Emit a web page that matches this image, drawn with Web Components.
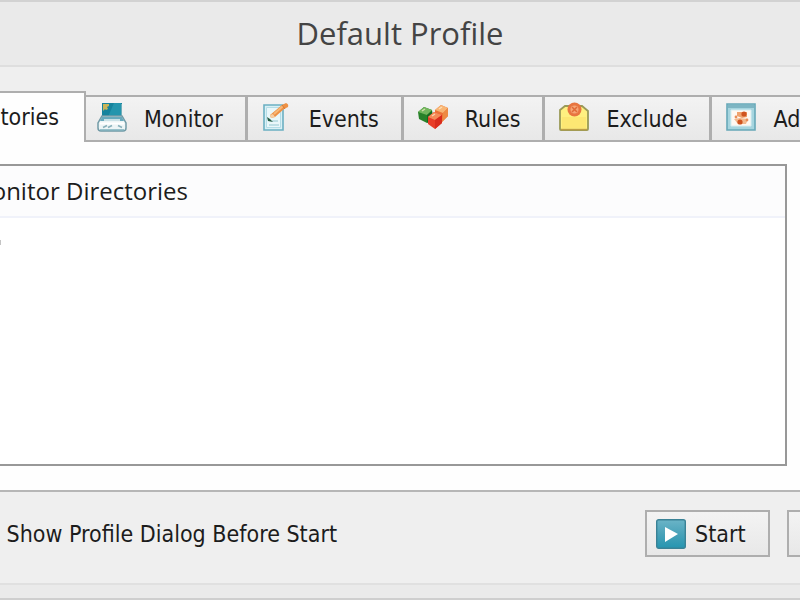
<!DOCTYPE html>
<html lang="en">
<head>
<meta charset="utf-8">
<title>Default Profile</title>
<style>
    html, body {
        margin: 0;
        height: 100%;
        overflow: hidden;
    }
    body {
        font: 23px/28px "DejaVu Sans Condensed", "DejaVu Sans", sans-serif;
        font-stretch: condensed;
        color: #1c1c1c;
        background: #efefef;
        --line: #aeaeae;
        --face: linear-gradient(#f3f3f3, #e8e8e8);
    }
</style>
</head>
<body>
<profile-dialog>
    <span slot="title">Default Profile</span>
    <profile-tab slot="tabs" selected>Directories</profile-tab>
    <profile-tab slot="tabs" icon="monitor">Monitor</profile-tab>
    <profile-tab slot="tabs" icon="events">Events</profile-tab>
    <profile-tab slot="tabs" icon="rules">Rules</profile-tab>
    <profile-tab slot="tabs" icon="exclude">Exclude</profile-tab>
    <profile-tab slot="tabs" icon="advanced">Advanced</profile-tab>
    <directory-list>Monitor Directories</directory-list>
    <dialog-option slot="footer">Always Show Profile Dialog Before Start</dialog-option>
    <dialog-button slot="footer" icon="start">Start</dialog-button>
    <dialog-button slot="footer" label="Cancel"></dialog-button>
</profile-dialog>

<script>
// 30x30 icons, keyed by the name used in the icon attribute
const ICONS = {
    monitor: `
        <path d="M5 1h20v14H5z" fill="#16839d"/>
        <path d="M17 1h7v14H11z" fill="#2495ad"/>
        <path d="M6 2h6v2l-2 1 1 2-2 1-1-1-2 2z" fill="#c9b458"/>
        <path d="M24.500 2v14" stroke="#70aeba"/>
        <path d="M5 14h20l4 7v5q0 3-3 3H4q-3 0-3-3v-5z" fill="#edf5f6" stroke="#719aa6" stroke-width="1.5"/>
        <path d="M5 15h20l2 4H3z" fill="#68aabd"/>
        <path d="M7 18h16" stroke="#c9e1e6" stroke-width="2"/>
        <path d="M3 21.500h24" stroke="#fff" stroke-width="2"/>
        <path d="M6 25.500l4-2m1 2l4-2m6 0l4 2" stroke="#8ab1bb" stroke-width="1.600"/>
        <path d="M3 28h24" stroke="#7cafbb" stroke-width="1.5"/>`,
    events: `
        <path d="M2 3h19v25H2z" fill="#d9f0f5" stroke="#6bb0c2" stroke-width="1.6"/>
        <path d="M4.500 5.500h14v20h-14z" fill="#e9f7fa" stroke="#b4dde7"/>
        <path d="M7 23h10M10 19h6" stroke="#94c7d1"/>
        <path d="M5 15l1 4 5 1-3-3z" fill="#255d43"/>
        <path d="M8 13L20 3l4-2q3 1 2 4l-4 2-9 8-4 1z" fill="#ee9145"/>
        <path d="M12 12l9-8" stroke="#f7b878" stroke-width="2"/>
        <path d="M20 3l3 4" stroke="#d9762e"/>
        <path d="M8 13l1 3 4-1-2-3z" fill="#f6cfa5"/>`,
    rules: `
        <path d="M0 10l6-5 8 3 1 8-6 5-8-4z" fill="#28822a"/>
        <path d="M0 10l6-5 8 3-5 5z" fill="#72b65d"/>
        <path d="M9 13l5-4 1 8-6 4z" fill="#176b20"/>
        <path d="M17 8l6-5 7 3v8l-6 6-7-3z" fill="#ec7136"/>
        <path d="M17 8l6-5 7 3-5 5z" fill="#f8b574"/>
        <path d="M25 11l5-5v8l-6 6z" fill="#ee8a43"/>
        <path d="M10 15l6-5 8 3v8l-7 6-7-5z" fill="#e83d28"/>
        <path d="M10 15l6-5 8 3-7 5z" fill="#f58b58"/>
        <path d="M17 18l7-5v8l-7 6z" fill="#d92c1d"/>
        <path d="M4 9l3-2m14 0l3-2M14 14l3-2" stroke="#fff0cf" stroke-width="1.5" opacity=".7"/>`,
    exclude: `
        <path d="M1 8l5-4h17l6 5v18q0 1-1 1H2q-1 0-1-1z" fill="#fff080" stroke="#9a9a58" stroke-width="1.8"/>
        <path d="M3 15h24v11H3z" fill="#fde773"/>
        <path d="M2 27.500h26" stroke="#bd9d45" stroke-width="1.5"/>
        <circle cx="15.500" cy="7.500" r="7" fill="#e87540"/>
        <circle cx="15.500" cy="7.500" r="4" fill="#f5a575"/>
        <path d="M13 5l5 5m0-5l-5 5" stroke="#e06a38" stroke-width="1.5"/>`,
    advanced: `
        <path d="M1 2h28v26H1z" fill="#a6d5df" stroke="#67a8b8" stroke-width="1.6"/>
        <path d="M2 3h26v3H2z" fill="#7db5c3"/>
        <path d="M5 8h20v16H5z" fill="#fff8f2" stroke="#d7eef2"/>
        <path d="M11 10h10v5l-5 1-5-2z" fill="#efa36f"/>
        <path d="M8 17l6-1 8 1-2 5h-8z" fill="#f3b98f"/>
        <circle cx="18" cy="12" r="2.6" fill="#cf5420"/>
        <circle cx="14" cy="20" r="2.6" fill="#cf5420"/>
        <circle cx="10" cy="15" r="1.4" fill="#e88d58"/>
        <circle cx="21" cy="18" r="1.4" fill="#e88d58"/>`,
    start: `
        <defs><linearGradient id="g" x2="0" y2="1">
            <stop stop-color="#6bb4c7"/><stop offset=".5" stop-color="#49a2b9"/><stop offset="1" stop-color="#2595b0"/>
        </linearGradient></defs>
        <rect x=".7" y=".7" width="28.6" height="28.6" rx="2" fill="url(#g)" stroke="#3a8296" stroke-width="1.4"/>
        <path d="M9 8l13 7-13 8z" fill="#fff"/>`
};

function icon(name) {
    if (!ICONS[name]) return '';
    return `<svg viewBox="0 0 30 30" width="30" height="30" aria-hidden="true">${ICONS[name]}</svg>`;
}

class ProfileDialog extends HTMLElement {
    constructor() {
        super();
        this.attachShadow({ mode: 'open' });
        this.shadowRoot.innerHTML = `
            <style>
                :host {
                    display: flex;
                    flex-direction: column;
                    height: 100vh;
                    box-sizing: border-box;
                    border-top: 2px solid #d2d2d2;
                    border-bottom: 2px solid #cecece;
                }
                header {
                    padding: 10px 0 11px;
                    border-bottom: 2px solid #dedede;
                    background: #eaeaea;
                    color: #444;
                    text-align: center;
                    font: 31px/42px "Open Sans", "Noto Sans", sans-serif;
                }
                nav {
                    display: flex;
                    align-items: flex-end;
                    padding-top: 24px;
                    overflow: hidden;
                }
                main {
                    flex: 1;
                    display: flex;
                    padding: 22px 13px 24px 0;
                    background: #fefefe;
                }
                footer {
                    display: flex;
                    align-items: center;
                    gap: 17px;
                    padding: 18px 0 26px;
                    border-top: 2px solid #b6b6b6;
                    overflow: hidden;
                }
                .frame {
                    height: 13px;
                    border-top: 2px solid #e0e0e0;
                    background: #eaeaea;
                }
            </style>
            <header><slot name="title"></slot></header>
            <nav role="tablist"><slot name="tabs"></slot></nav>
            <main><slot></slot></main>
            <footer><slot name="footer"></slot></footer>
            <div class="frame"></div>
        `;
    }
}

class ProfileTab extends HTMLElement {
    constructor() {
        super();
        this.attachShadow({ mode: 'open' });
        const selected = this.hasAttribute('selected');
        this.shadowRoot.innerHTML = `
            <style>
                :host {
                    display: block;
                    flex: none;
                }
                button {
                    display: flex;
                    align-items: center;
                    gap: 17px;
                    height: 47px;
                    margin: 0;
                    padding: 0 22px 0 14px;
                    border: 2px solid var(--line);
                    border-width: 2px 3px 2px 0;
                    background: var(--face);
                    color: inherit;
                    font: inherit;
                }
                svg {
                    display: block;
                    margin-bottom: 4px;
                }
                /* the open tab is taller and overlaps its neighbour */
                :host([selected]) {
                    position: relative;
                    z-index: 1;
                    width: 86px;
                    margin-right: -3px;
                }
                :host([selected]) button {
                    width: 100%;
                    height: 51px;
                    justify-content: flex-end;
                    padding: 0 25px 2px 0;
                    border-width: 2px 2px 0 0;
                    background: #fefefe;
                }
            </style>
            <button type="button" role="tab" aria-selected="${selected}">
                ${icon(this.getAttribute('icon'))}<slot></slot>
            </button>
        `;
    }
}

class DirectoryList extends HTMLElement {
    constructor() {
        super();
        this.attachShadow({ mode: 'open' });
        this.shadowRoot.innerHTML = `
            <style>
                :host {
                    display: block;
                    flex: 1;
                    border: 2px solid #989898;
                    border-left: 0;
                    background: #fff;
                    overflow: hidden;
                }
                .column {
                    display: flex;
                    justify-content: flex-end;
                    width: 188px;
                    padding: 11px 0;
                    font: 24px/28px "Open Sans", "Noto Sans", sans-serif;
                    white-space: nowrap;
                }
                .head {
                    border-bottom: 2px solid #f0f2fa;
                    background: #fcfcfd;
                }
                .entry {
                    width: 1px;
                    height: 5px;
                    margin-top: 22px;
                    background: #c4c4c4;
                }
            </style>
            <div class="head"><div class="column"><slot></slot></div></div>
            <div class="entry"></div>
        `;
    }
}

class DialogOption extends HTMLElement {
    constructor() {
        super();
        this.attachShadow({ mode: 'open' });
        this.shadowRoot.innerHTML = `
            <style>
                :host {
                    display: block;
                    flex: 1;
                }
                label {
                    display: flex;
                    align-items: center;
                    justify-content: flex-end;
                    gap: 10px;
                    width: 337px;
                    white-space: nowrap;
                }
                input {
                    flex: none;
                    width: 20px;
                    height: 20px;
                    margin: 0;
                }
            </style>
            <label><input type="checkbox"><span><slot></slot></span></label>
        `;
    }
}

class DialogButton extends HTMLElement {
    constructor() {
        super();
        this.attachShadow({ mode: 'open' });
        const label = this.getAttribute('label');
        this.shadowRoot.innerHTML = `
            <style>
                :host {
                    display: block;
                    flex: none;
                }
                :host([label]) {
                    width: 13px;
                }
                button {
                    display: flex;
                    align-items: center;
                    gap: 9px;
                    min-width: 125px;
                    height: 47px;
                    margin: 0;
                    padding: 0 9px;
                    border: 2px solid var(--line);
                    background: var(--face);
                    color: inherit;
                    font: inherit;
                }
            </style>
            <button type="button" ${label ? `aria-label="${label}"` : ''}>
                ${icon(this.getAttribute('icon'))}<slot></slot>
            </button>
        `;
    }
}

customElements.define('profile-dialog', ProfileDialog);
customElements.define('profile-tab', ProfileTab);
customElements.define('directory-list', DirectoryList);
customElements.define('dialog-option', DialogOption);
customElements.define('dialog-button', DialogButton);
</script>
</body>
</html>
